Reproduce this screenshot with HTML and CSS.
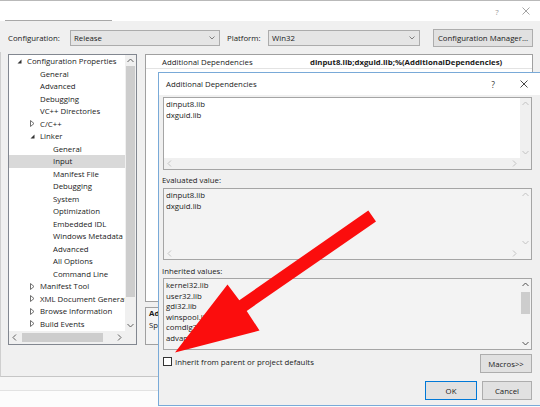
FILE: index.html
```html
<!DOCTYPE html>
<html>
<head>
<meta charset="utf-8">
<link rel="stylesheet" href="styles.css">
</head>
<body>
<div class="window">
  <div class="titlebar">
    <div class="title-field"></div>
    <div class="tb-buttons">
      <span class="tb-help">?</span>
      <span class="tb-close"><svg width="8" height="8" viewBox="0 0 8 8"><path d="M0.5 0.5L7.5 7.5M7.5 0.5L0.5 7.5" stroke="#9a9a9a" stroke-width="0.9" fill="none"/></svg></span>
    </div>
  </div>

  <div class="config-row">
    <span class="cfg-label">Configuration:</span>
    <div class="combo combo-config"><span class="combo-text">Release</span><svg class="chev" width="6" height="4" viewBox="0 0 6 4"><polyline points="0.5,0.5 3,3 5.5,0.5" fill="none" stroke="#707070" stroke-width="0.9"/></svg></div>
    <span class="cfg-label plat-label">Platform:</span>
    <div class="combo combo-plat"><span class="combo-text">Win32</span><svg class="chev" width="6" height="4" viewBox="0 0 6 4"><polyline points="0.5,0.5 3,3 5.5,0.5" fill="none" stroke="#707070" stroke-width="0.9"/></svg></div>
    <button class="btn cfg-btn">Configuration Manager...</button>
  </div>

  <div class="main">
    <div class="tree">
      <div class="tree-content">
        <div class="node l0"><span class="twisty"><svg width="5" height="5" viewBox="0 0 5 5"><polygon points="4.5,0.5 4.5,4.5 0.5,4.5" fill="#333"/></svg></span><span>Configuration Properties</span></div>
        <div class="node l1"><span class="twisty"></span><span>General</span></div>
        <div class="node l1"><span class="twisty"></span><span>Advanced</span></div>
        <div class="node l1"><span class="twisty"></span><span>Debugging</span></div>
        <div class="node l1"><span class="twisty"></span><span>VC++ Directories</span></div>
        <div class="node l1"><span class="twisty"><svg width="5" height="7" viewBox="0 0 5 7"><polygon points="0.5,0.5 4,3.5 0.5,6.5" fill="none" stroke="#606060" stroke-width="0.9"/></svg></span><span>C/C++</span></div>
        <div class="node l1"><span class="twisty"><svg width="5" height="5" viewBox="0 0 5 5"><polygon points="4.5,0.5 4.5,4.5 0.5,4.5" fill="#333"/></svg></span><span>Linker</span></div>
        <div class="node l2"><span class="twisty"></span><span>General</span></div>
        <div class="node l2 sel"><span class="twisty"></span><span>Input</span></div>
        <div class="node l2"><span class="twisty"></span><span>Manifest File</span></div>
        <div class="node l2"><span class="twisty"></span><span>Debugging</span></div>
        <div class="node l2"><span class="twisty"></span><span>System</span></div>
        <div class="node l2"><span class="twisty"></span><span>Optimization</span></div>
        <div class="node l2"><span class="twisty"></span><span>Embedded IDL</span></div>
        <div class="node l2"><span class="twisty"></span><span>Windows Metadata</span></div>
        <div class="node l2"><span class="twisty"></span><span>Advanced</span></div>
        <div class="node l2"><span class="twisty"></span><span>All Options</span></div>
        <div class="node l2"><span class="twisty"></span><span>Command Line</span></div>
        <div class="node l1"><span class="twisty"><svg width="5" height="7" viewBox="0 0 5 7"><polygon points="0.5,0.5 4,3.5 0.5,6.5" fill="none" stroke="#606060" stroke-width="0.9"/></svg></span><span>Manifest Tool</span></div>
        <div class="node l1"><span class="twisty"><svg width="5" height="7" viewBox="0 0 5 7"><polygon points="0.5,0.5 4,3.5 0.5,6.5" fill="none" stroke="#606060" stroke-width="0.9"/></svg></span><span>XML Document Generator</span></div>
        <div class="node l1"><span class="twisty"><svg width="5" height="7" viewBox="0 0 5 7"><polygon points="0.5,0.5 4,3.5 0.5,6.5" fill="none" stroke="#606060" stroke-width="0.9"/></svg></span><span>Browse Information</span></div>
        <div class="node l1"><span class="twisty"><svg width="5" height="7" viewBox="0 0 5 7"><polygon points="0.5,0.5 4,3.5 0.5,6.5" fill="none" stroke="#606060" stroke-width="0.9"/></svg></span><span>Build Events</span></div>
      </div>
      <div class="vscroll">
        <span class="sb-btn"><svg width="7" height="5" viewBox="0 0 7 5"><polyline points="0.5,4 3.5,1 6.5,4" fill="none" stroke="#606060" stroke-width="1"/></svg></span>
        <span class="tree-vthumb"></span>
        <span class="sb-btn sb-end"><svg width="7" height="5" viewBox="0 0 7 5"><polyline points="0.5,1 3.5,4 6.5,1" fill="none" stroke="#606060" stroke-width="1"/></svg></span>
      </div>
      <div class="hscroll">
        <span class="sb-btn"><svg width="5" height="7" viewBox="0 0 5 7"><polyline points="4,0.5 1,3.5 4,6.5" fill="none" stroke="#606060" stroke-width="1"/></svg></span>
        <span class="tree-hthumb"></span>
        <span class="sb-btn sb-end"><svg width="5" height="7" viewBox="0 0 5 7"><polyline points="1,0.5 4,3.5 1,6.5" fill="none" stroke="#606060" stroke-width="1"/></svg></span>
      </div>
      <div class="corner"></div>
    </div>

    <div class="props">
      <div class="grid">
        <div class="grid-row"><span class="g-name">Additional Dependencies</span><span class="g-val">dinput8.lib;dxguid.lib;%(AdditionalDependencies)</span></div>
      </div>
      <div class="desc">
        <div class="desc-title">Additional Dependencies</div>
        <div class="desc-text">Specifies additional items to add to the link command line [i.e. kernel32.lib]</div>
      </div>
    </div>
  </div>

  <div class="footer"><div class="footer-line"></div></div>
</div>

<div class="dialog">
  <div class="dlg-title">
    <span class="dlg-caption">Additional Dependencies</span>
    <span class="dlg-help">?</span>
    <span class="dlg-close"><svg width="8" height="8" viewBox="0 0 8 8"><path d="M0.5 0.5L7.5 7.5M7.5 0.5L0.5 7.5" stroke="#333" stroke-width="0.9" fill="none"/></svg></span>
  </div>
  <div class="dlg-body">
    <div class="edit edit-main">
      <div class="edit-text">dinput8.lib<br>dxguid.lib</div>
      <div class="e-vscroll">
        <span class="sb-btn"><svg width="7" height="5" viewBox="0 0 7 5"><polyline points="0.5,4 3.5,1 6.5,4" fill="none" stroke="#c2c2c2" stroke-width="1"/></svg></span>
        <span class="sb-btn sb-end"><svg width="7" height="5" viewBox="0 0 7 5"><polyline points="0.5,1 3.5,4 6.5,1" fill="none" stroke="#c2c2c2" stroke-width="1"/></svg></span>
      </div>
      <div class="e-hscroll">
        <span class="sb-btn"><svg width="5" height="7" viewBox="0 0 5 7"><polyline points="4,0.5 1,3.5 4,6.5" fill="none" stroke="#c2c2c2" stroke-width="1"/></svg></span>
        <span class="sb-btn sb-end"><svg width="5" height="7" viewBox="0 0 5 7"><polyline points="1,0.5 4,3.5 1,6.5" fill="none" stroke="#c2c2c2" stroke-width="1"/></svg></span>
      </div>
      <div class="e-corner"></div>
    </div>

    <div class="dlg-label lbl-eval">Evaluated value:</div>
    <div class="edit edit-ro">
      <div class="edit-text">dinput8.lib<br>dxguid.lib</div>
      <div class="e-vscroll">
        <span class="sb-btn"><svg width="7" height="5" viewBox="0 0 7 5"><polyline points="0.5,4 3.5,1 6.5,4" fill="none" stroke="#c2c2c2" stroke-width="1"/></svg></span>
        <span class="sb-btn sb-end"><svg width="7" height="5" viewBox="0 0 7 5"><polyline points="0.5,1 3.5,4 6.5,1" fill="none" stroke="#c2c2c2" stroke-width="1"/></svg></span>
      </div>
      <div class="e-hscroll">
        <span class="sb-btn"><svg width="5" height="7" viewBox="0 0 5 7"><polyline points="4,0.5 1,3.5 4,6.5" fill="none" stroke="#c2c2c2" stroke-width="1"/></svg></span>
        <span class="sb-btn sb-end"><svg width="5" height="7" viewBox="0 0 5 7"><polyline points="1,0.5 4,3.5 1,6.5" fill="none" stroke="#c2c2c2" stroke-width="1"/></svg></span>
      </div>
      <div class="e-corner"></div>
    </div>

    <div class="dlg-label lbl-inh">Inherited values:</div>
    <div class="edit edit-inh">
      <div class="edit-text">kernel32.lib<br>user32.lib<br>gdi32.lib<br>winspool.lib<br>comdlg32.lib<br>advapi32.lib</div>
      <div class="e-vscroll">
        <span class="sb-btn"><svg width="7" height="5" viewBox="0 0 7 5"><polyline points="0.5,4 3.5,1 6.5,4" fill="none" stroke="#505050" stroke-width="1"/></svg></span>
        <span class="inh-thumb"></span>
        <span class="sb-btn sb-end"><svg width="7" height="5" viewBox="0 0 7 5"><polyline points="0.5,1 3.5,4 6.5,1" fill="none" stroke="#505050" stroke-width="1"/></svg></span>
      </div>
    </div>

    <div class="chk-row">
      <div class="chk-wrap"><span class="chk"></span><span class="chk-label">Inherit from parent or project defaults</span></div>
      <button class="btn btn-macros">Macros&gt;&gt;</button>
    </div>
    <div class="btn-row">
      <button class="btn btn-ok">OK</button>
      <button class="btn btn-cancel">Cancel</button>
    </div>
  </div>
</div>

<svg class="arrow" width="540" height="407" viewBox="0 0 540 407">
  <polygon points="376,221.5 368.3,210.5 239.3,300.3 227.5,284.5 175,352.5 259.5,330.5 246.7,310.9" fill="#fb0d0d"/>
</svg>
</body>
</html>
```

FILE: styles.css
```css
* { box-sizing: border-box; margin: 0; padding: 0; }
html, body { width: 540px; height: 407px; overflow: hidden; }
body {
  background: #f0f0f0;
  font-family: "Open Sans", "Noto Sans", sans-serif;
  font-size: 7.8px;
  color: #1a1a1a;
  position: relative;
}

.window { width: 540px; height: 407px; display: flex; flex-direction: column; }

/* outer title bar */
.titlebar {
  height: 21px; flex: none;
  background: #fff;
  border-top: 1px solid #b9b9b9;
  display: flex; align-items: center;
}
.title-field { width: 107px; margin-left: 5px; align-self: stretch; border-bottom: 1px solid #a8a8a8; }
.tb-buttons { margin-left: auto; display: flex; align-items: center; height: 100%; }
.tb-help { width: 30px; text-align: center; color: #9a9a9a; font-size: 8px; }
.tb-close { width: 28px; display: flex; justify-content: center; align-items: center; }

/* configuration row */
.config-row { height: 31px; flex: none; padding: 2px 0 0 8px; display: flex; align-items: center; }
.cfg-label { width: 62px; flex: none; white-space: nowrap; }
.plat-label { width: 48px; padding-left: 7px; }
.combo {
  height: 16px; flex: none;
  background: #e5e5e5; border: 1px solid #acacac;
  display: flex; align-items: center; padding: 0 4px 0 3px;
}
.combo-config { width: 150px; }
.combo-plat { width: 152px; }
.combo-text { flex: 1; }
.btn {
  font-family: inherit; font-size: 7.8px; color: #1a1a1a;
  background: #e1e1e1; border: 1px solid #adadad;
  display: flex; align-items: center; justify-content: center;
}
.cfg-btn { width: 100px; height: 18px; margin-left: 13px; flex: none; }

/* main area */
.main {
  height: 325px; flex: none;
  border-left: 1px solid #cfcfcf; border-bottom: 1px solid #c6c6c6;
  display: flex; align-items: flex-start; gap: 8px;
  padding: 2px 0 0 7px;
}

.tree {
  width: 129px; height: 291px; flex: none;
  background: #fff; border: 1px solid #828790;
  display: grid; grid-template-columns: 1fr 11px; grid-template-rows: 1fr 13px;
}
.tree-content { overflow: hidden; }
.node { height: 12.5px; display: flex; align-items: center; white-space: nowrap; }
.l0 { padding-left: 5px; }
.l1 { padding-left: 18px; }
.l2 { padding-left: 31px; }
.twisty { width: 13px; flex: none; display: flex; align-items: center; padding-left: 3px; }
.sel { background: #d9d9d9; }

.vscroll, .e-vscroll { background: #f0f0f0; display: flex; flex-direction: column; }
.hscroll, .e-hscroll { background: #f0f0f0; display: flex; flex-direction: row; }
.sb-btn { width: 11px; height: 11px; flex: none; display: flex; align-items: center; justify-content: center; }
.hscroll .sb-btn { height: 13px; }
.sb-end { margin-top: auto; }
.hscroll .sb-end, .e-hscroll .sb-end { margin-top: 0; margin-left: auto; }
.tree-vthumb { width: 9px; height: 231px; margin-left: 1px; background: #cdcdcd; }
.tree-hthumb { width: 81px; height: 9px; margin: 2px 0 0 2px; background: #cdcdcd; }
.corner, .e-corner { background: #f0f0f0; }

.props { width: 388px; flex: none; display: flex; flex-direction: column; }
.grid { height: 248px; background: #fff; border: 1px solid #a0a0a0; }
.grid-row { height: 14px; display: flex; align-items: center; border-bottom: 1px solid #e3e3e3; white-space: nowrap; }
.g-name { width: 164px; padding-left: 16px; flex: none; }
.g-val { font-weight: 700; }
.desc {
  height: 38px; margin-top: 5px;
  background: #f4f4f4; border: 1px solid #a0a0a0;
  padding: 0 3px; line-height: 11.5px; white-space: nowrap; overflow: hidden;
}
.desc-title { font-weight: 700; }

.footer { flex: 1; padding-top: 13px; background: #f6f6f6; }
.footer-line { height: 100%; border-top: 1px solid #e2e2e2; background: #fcfcfc; }

/* inner dialog */
.dialog {
  position: absolute; left: 158px; top: 72px;
  width: 383px; height: 334px;
  background: #f0f0f0; border: 1px solid #79aad8;
  display: flex; flex-direction: column;
}
.dlg-title { height: 22px; flex: none; background: #fff; display: flex; align-items: center; padding-left: 7px; }
.dlg-caption { flex: 1; }
.dlg-help { width: 30px; text-align: center; font-size: 8.5px; color: #333; }
.dlg-close { width: 32px; display: flex; justify-content: center; align-items: center; }
.dlg-body { flex: 1; padding: 2px 8px 0 4px; display: flex; flex-direction: column; }

.edit {
  border: 1px solid #a5a5a5; flex: none;
  display: grid; grid-template-columns: 1fr 11px; grid-template-rows: 1fr 11px;
}
.edit-main { height: 73px; background: #fff; }
.edit-ro { height: 72px; background: #f3f3f3; }
.edit-ro .e-vscroll, .edit-ro .e-hscroll, .edit-ro .e-corner { background: #f3f3f3; }
.edit-inh { height: 72px; background: #f3f3f3; grid-template-rows: 1fr; overflow: hidden; }
.edit-inh .e-vscroll { background: #f3f3f3; }
.edit-text { padding: 1px 3px 0 2px; line-height: 10.6px; overflow: hidden; white-space: nowrap; }
.inh-thumb { width: 9px; height: 22px; margin: 2px 0 0 1px; background: #cdcdcd; }

.dlg-label { margin-left: -1px; line-height: 14px; height: 18px; }
.lbl-eval { padding-top: 3px; }
.lbl-inh { padding-top: 4px; }

.chk-row { height: 19px; margin-top: 4px; display: flex; flex: none; }
.chk-wrap { display: flex; align-items: center; height: 11px; margin-top: 2px; }
.chk { width: 9px; height: 9px; background: #fff; border: 1px solid #333; flex: none; }
.chk-label { margin-left: 3px; white-space: nowrap; }
.btn-macros { width: 52px; height: 19px; margin-left: auto; }
.btn-row { display: flex; justify-content: flex-end; gap: 5px; margin-top: 8px; flex: none; }
.btn-ok { width: 52px; height: 19px; border-color: #0078d7; }
.btn-cancel { width: 50px; height: 19px; }

.arrow { position: absolute; left: 0; top: 0; pointer-events: none; }
```
